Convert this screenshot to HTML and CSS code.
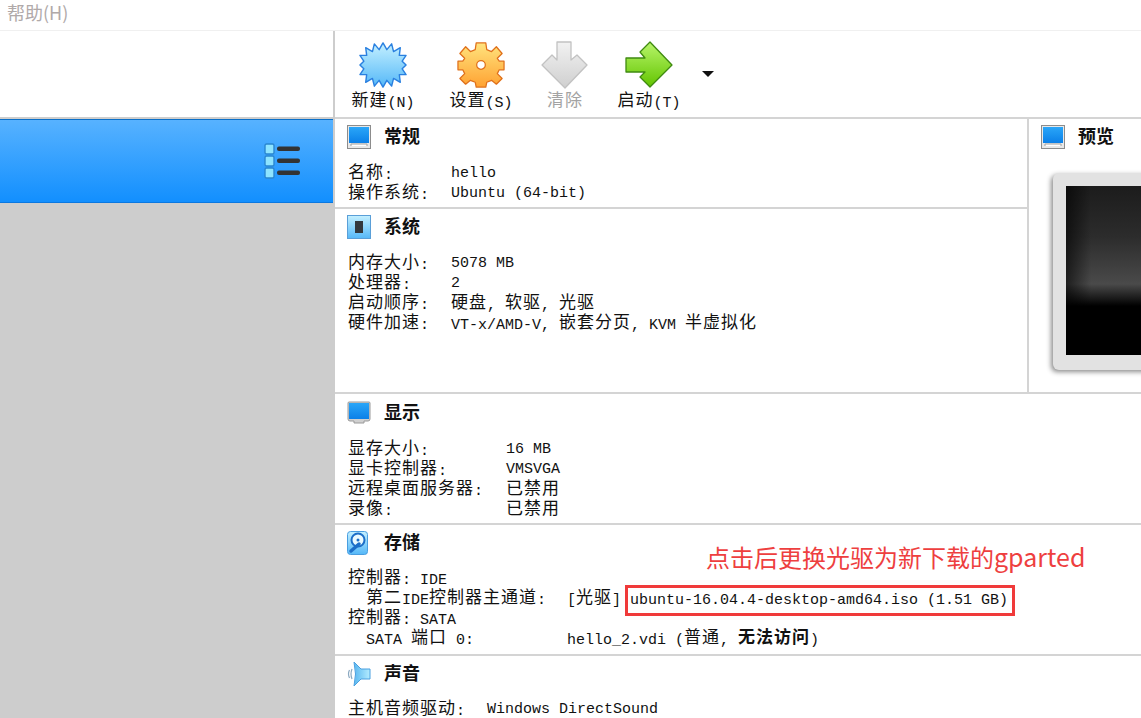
FILE: index.html
```html
<!DOCTYPE html>
<html lang="zh">
<head>
<meta charset="utf-8">
<title>VirtualBox</title>
<link rel="stylesheet" href="styles.css">
</head>
<body>
<svg class="defs" width="0" height="0" aria-hidden="true">
  <defs>
    <linearGradient id="gb" x1="0" y1="0" x2="0" y2="1"><stop offset="0" stop-color="#c4f0ff"/><stop offset="1" stop-color="#55b8f8"/></linearGradient>
    <linearGradient id="go" x1="0" y1="0" x2="0" y2="1"><stop offset="0" stop-color="#ffe47e"/><stop offset="1" stop-color="#ffa232"/></linearGradient>
    <linearGradient id="gg" x1="0" y1="0" x2="0" y2="1"><stop offset="0" stop-color="#f2f2f2"/><stop offset="1" stop-color="#cfcfcf"/></linearGradient>
    <linearGradient id="gn" x1="0" y1="0" x2="0" y2="1"><stop offset="0" stop-color="#b8f56a"/><stop offset="1" stop-color="#62c400"/></linearGradient>
    <linearGradient id="gs" x1="0" y1="0" x2="0" y2="1"><stop offset="0" stop-color="#2aa6f8"/><stop offset="1" stop-color="#0b80e8"/></linearGradient>
    <linearGradient id="gh" x1="0" y1="0" x2="1" y2="0"><stop offset="0" stop-color="#5ab8f0"/><stop offset="1" stop-color="#b4ecff"/></linearGradient>
    <symbol id="mon" viewBox="0 0 24 24">
      <rect x="0.5" y="0.5" width="23" height="23" fill="#e8e8e8" stroke="#8c8c8c"/>
      <rect x="2" y="2" width="20" height="16" fill="url(#gs)"/>
      <path d="M4 21V19H20V21" fill="#fff" stroke="#a0a0a0"/>
    </symbol>
  </defs>
</svg>
<header class="menubar"><span class="menu-item">帮助(H)</span></header>
<div class="app">
  <aside class="sidebar">
    <div class="side-blank"></div>
    <div class="vm-row">
      <svg class="list-icon" width="38" height="36" viewBox="0 0 38 36">
        <g fill="#8ee4ff" stroke="#2a86d0" stroke-width="1.4">
          <rect x="1" y="1" width="9" height="10" rx="1.5"/>
          <rect x="1" y="13" width="9" height="10" rx="1.5"/>
          <rect x="1" y="25" width="9" height="10" rx="1.5"/>
        </g>
        <g fill="#333">
          <rect x="13" y="3.500" width="23" height="4.500" rx="2"/>
          <rect x="13" y="15.500" width="23" height="4.500" rx="2"/>
          <rect x="13" y="27.500" width="23" height="4.500" rx="2"/>
        </g>
      </svg>
    </div>
    <div class="side-rest"></div>
  </aside>
  <main class="main">
    <nav class="toolbar">
      <div class="tool tool-new">
        <svg width="48" height="48" viewBox="0 0 50 50"><polygon fill="url(#gb)" stroke="#2a80e0" stroke-width="1.500" stroke-linejoin="round" points="25,2 29,9 34,3 36,11 43,7 42,15 49,15 45,21 49,25 45,29 49,35 42,35 43,43 36,39 34,47 29,41 25,48 21,41 16,47 14,39 7,43 8,35 1,35 5,29 1,25 5,21 1,15 8,15 7,7 14,11 16,3 21,9"/></svg>
        <span class="tool-label"><span class="c">新建</span>(N)</span>
      </div>
      <div class="tool tool-set">
        <svg width="48" height="48" viewBox="0 0 50 50"><path fill="url(#go)" stroke="#e0701a" stroke-width="1.300" stroke-linejoin="round" fill-rule="evenodd" d="M20 2H30L31 9L36 11L41 6L47 13L42 18L44 21H49V30H44L42 34L47 39L41 45L36 41L31 43L30 48H20L19 43L14 41L9 45L3 39L8 34L6 30H1V21H6L8 18L3 13L9 6L14 11L19 9ZM25 20.500A4.500 4.500 0 1 0 25 29.500A4.500 4.500 0 1 0 25 20.500Z"/></svg>
        <span class="tool-label"><span class="c">设置</span>(S)</span>
      </div>
      <div class="tool tool-clear">
        <svg width="48" height="48" viewBox="0 0 48 48"><path fill="url(#gg)" stroke="#c2c2c2" stroke-width="1.300" stroke-linejoin="round" d="M16 1H30V19L36 14L46 24L24 47L1 24L11 14L16 19Z"/></svg>
        <span class="tool-label muted"><span class="c">清除</span></span>
      </div>
      <div class="tool tool-start">
        <svg width="48" height="48" viewBox="0 0 48 48"><path fill="url(#gn)" stroke="#3f8a10" stroke-width="1.300" stroke-linejoin="round" d="M25 1L47 24L25 46L15 36L20 31H1V17H20L15 11Z"/></svg>
        <span class="tool-label"><span class="c">启动</span>(T)</span>
      </div>
      <span class="caret"></span>
    </nav>
    <div class="details">
      <div class="top-row">
        <div class="top-left">
          <section class="sec sec-general">
            <h2 class="sec-head"><svg class="sec-icon" width="24" height="24"><use href="#mon"/></svg><span class="c">常规</span></h2>
            <div class="kv kv-a">
              <span><span class="c">名称</span>:</span><span>hello</span>
              <span><span class="c">操作系统</span>:</span><span>Ubuntu (64-bit)</span>
            </div>
          </section>
          <section class="sec sec-system">
            <h2 class="sec-head">
              <svg class="sec-icon" width="24" height="24" viewBox="0 0 24 24"><rect x="0.500" y="0.500" width="23" height="23" fill="url(#gb)" stroke="#5a9fd8"/><rect x="8" y="6" width="8" height="12" fill="#33383d"/></svg>
              <span class="c">系统</span>
            </h2>
            <div class="kv kv-a">
              <span><span class="c">内存大小</span>:</span><span>5078 MB</span>
              <span><span class="c">处理器</span>:</span><span>2</span>
              <span><span class="c">启动顺序</span>:</span><span><span class="c">硬盘</span>, <span class="c">软驱</span>, <span class="c">光驱</span></span>
              <span><span class="c">硬件加速</span>:</span><span>VT-x/AMD-V, <span class="c">嵌套分页</span>, KVM <span class="c">半虚拟化</span></span>
            </div>
          </section>
        </div>
        <section class="preview">
          <h2 class="sec-head"><svg class="sec-icon" width="24" height="24"><use href="#mon"/></svg><span class="c">预览</span></h2>
          <div class="screen"><div class="screen-glass"></div></div>
        </section>
      </div>
      <section class="sec sec-display">
        <h2 class="sec-head">
          <svg class="sec-icon" width="24" height="24" viewBox="0 0 24 24"><path d="M2 1H22Q23 1 23 2V18Q23 20 21 20H17V22H7V20H3Q1 20 1 18V2Q1 1 2 1Z" fill="#d0d0d0" stroke="#9a9a9a"/><rect x="2" y="2" width="20" height="16" fill="url(#gs)"/></svg>
          <span class="c">显示</span>
        </h2>
        <div class="kv kv-b">
          <span><span class="c">显存大小</span>:</span><span>16 MB</span>
          <span><span class="c">显卡控制器</span>:</span><span>VMSVGA</span>
          <span><span class="c">远程桌面服务器</span>:</span><span><span class="c">已禁用</span></span>
          <span><span class="c">录像</span>:</span><span><span class="c">已禁用</span></span>
        </div>
      </section>
      <section class="sec sec-storage">
        <h2 class="sec-head">
          <svg class="sec-icon" width="24" height="24" viewBox="0 0 24 24"><rect x="0.500" y="0.500" width="20" height="23" rx="3" fill="url(#gb)" stroke="#4a9ee0"/><circle cx="11" cy="9" r="6.500" fill="#eafaff" stroke="#1c6ec8" stroke-width="2"/><circle cx="11" cy="9" r="1.500" fill="#1c6ec8"/><path d="M4 20L12 13" stroke="#1c6ec8" stroke-width="3.500" stroke-linecap="round"/></svg>
          <span class="c">存储</span>
        </h2>
        <div class="kv kv-c">
          <span class="span2"><span class="c">控制器</span>: IDE</span>
          <span class="ind"><span class="c">第二</span>IDE<span class="c">控制器主通道</span>:</span><span>[<span class="c">光驱</span>] <span class="iso">ubuntu-16.04.4-desktop-amd64.iso (1.51 GB)</span></span>
          <span class="span2"><span class="c">控制器</span>: SATA</span>
          <span class="ind">SATA <span class="c">端口</span> 0:</span><span>hello_2.vdi (<span class="c">普通</span>, <span class="c c-b">无法访问</span>)</span>
        </div>
        <div class="note"><span class="note-cjk">点击后更换光驱为新下载的</span>gparted</div>
      </section>
      <section class="sec sec-audio">
        <h2 class="sec-head">
          <svg class="sec-icon" width="24" height="26" viewBox="0 0 24 26"><path d="M7 1L14 8H23V18H14L7 25Q10 13 7 1Z" fill="url(#gh)" stroke="#4aa0e0"/><path d="M5 8Q3 13 5 18M2.500 9Q0.500 13 2.500 17" fill="none" stroke="#8aa8c0" stroke-width="1.200"/></svg>
          <span class="c">声音</span>
        </h2>
        <div class="kv kv-d">
          <span><span class="c">主机音频驱动</span>:</span><span>Windows DirectSound</span>
        </div>
      </section>
    </div>
  </main>
</div>
</body>
</html>
```
FILE: styles.css
```css
* { box-sizing: border-box; }
html, body { margin: 0; height: 100%; overflow: hidden; background: #fff; }
body { font-family: "Liberation Mono", "DejaVu Sans Mono", monospace; font-size: 15px; line-height: 20px; color: #111; }
.defs { position: absolute; }
.c { font-family: "Noto Sans CJK SC", sans-serif; font-size: 17px; letter-spacing: 1px; font-weight: 400; line-height: 14px; vertical-align: 1px; }
.c-b { font-weight: 700; }
.menubar { height: 31px; padding: 0 7px 6px; border-bottom: 1px solid #f0f0f0; display: flex; align-items: center; }
.menu-item { font-family: "Noto Sans CJK SC", sans-serif; font-size: 18px; line-height: 24px; color: #b0a9a9; }
.app { display: flex; height: 687px; }
.sidebar { width: 335px; flex: none; display: flex; flex-direction: column; border-right: 2px solid #cdcdcd; }
.side-blank { height: 88px; border-bottom: 2px solid #cdcdcd; }
.vm-row { height: 84px; display: flex; justify-content: flex-end; align-items: center; padding-right: 31px; background: linear-gradient(#57b2ff, #128ffe); border-top: 1px solid #0b6fc8; border-bottom: 1px solid #0b78e0; }
.side-rest { flex: 1; background: #cdcdcd; }
.main { flex: 1; min-width: 0; display: flex; flex-direction: column; }
.toolbar { height: 88px; display: flex; border-bottom: 2px solid #d4d4d4; position: relative; }
.tool { display: flex; flex-direction: column; align-items: center; position: absolute; top: 10px; width: 80px; }
.tool-new { left: 8px; }
.tool-set { left: 106px; }
.tool-clear { left: 190px; }
.tool-start { left: 274px; }
.tool-label { height: 20px; margin-top: 3px; white-space: nowrap; }
.tool svg { display: block; }
.muted .c { color: #a3a3a3; }
.caret { position: absolute; left: 367px; top: 40px; width: 0; height: 0; border-left: 6px solid transparent; border-right: 6px solid transparent; border-top: 6px solid #111; }
.details { flex: 1; min-height: 0; display: flex; flex-direction: column; }
.top-row { height: 275px; display: flex; border-bottom: 2px solid #d4d4d4; flex: none; }
.top-left { flex: 1; min-width: 0; display: flex; flex-direction: column; }
.sec { padding: 5px 0 0 12px; position: relative; flex: none; }
.sec-general { height: 90px; border-bottom: 2px solid #d4d4d4; }
.sec-system { flex: 1; }
.sec-display { height: 131px; padding-top: 6px; border-bottom: 2px solid #d4d4d4; }
.sec-storage { height: 131px; border-bottom: 2px solid #d4d4d4; }
.sec-audio { flex: 1; }
.sec-head { margin: 0; height: 26px; display: flex; align-items: center; gap: 13px; }
.sec-head .c { font-weight: 700; font-size: 18px; letter-spacing: 0; line-height: 16px; margin-bottom: 4px; }
.sec-icon { flex: none; display: block; }
.kv { display: grid; grid-auto-rows: 20px; margin-top: 14px; padding-left: 1px; white-space: nowrap; }
.kv-a { grid-template-columns: 103px 1fr; }
.kv-b { grid-template-columns: 158px 1fr; }
.kv-c { grid-template-columns: 219px 1fr; margin-top: 13px; }
.kv-d { grid-template-columns: 139px 1fr; margin-top: 13px; }
.span2 { grid-column: 1 / -1; }
.ind { padding-left: 18px; }
.iso { border: 3px solid #f03a3a; padding: 4px 4px 4px 2px; margin-left: -5px; }
.note { position: absolute; left: 371px; top: 14px; color: #ee3f3f; font-family: "Noto Sans CJK SC", sans-serif; font-size: 25px; line-height: 34px; white-space: nowrap; }
.note-cjk { font-size: 24px; }
.preview { width: 114px; flex: none; border-left: 2px solid #d4d4d4; padding: 5px 0 0 12px; overflow: hidden; }
.screen { width: 120px; height: 197px; margin-top: 23px; margin-left: 12px; border-radius: 6px 0 0 6px; background: #e2e2e2; box-shadow: -2px 2px 5px rgba(0,0,0,.45); padding: 13px 0 15px 13px; }
.screen-glass { height: 100%; background: linear-gradient(90deg, rgba(0,0,0,.6), transparent 25px), linear-gradient(#1c1c1c, #2c2c2c 30%, #4a4a4a 58%, #000 71%); }
```
